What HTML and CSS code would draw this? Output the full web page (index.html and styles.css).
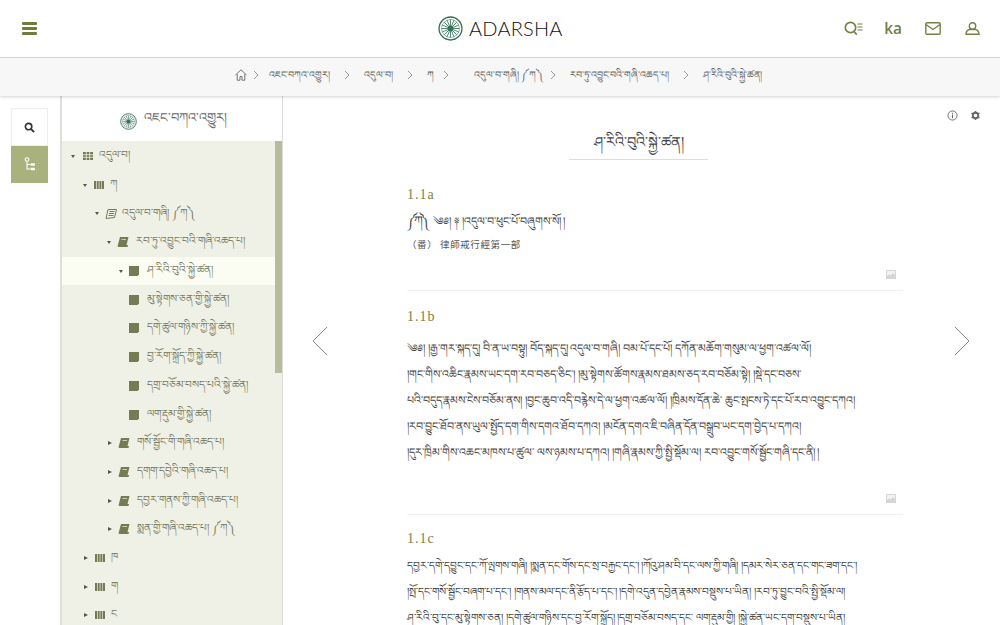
FILE: index.html
```html
<!DOCTYPE html>
<html lang="bo">
<head>
<meta charset="utf-8">
<title>Adarsha</title>
<link rel="stylesheet" href="styles.css">
</head>
<body>
<svg class="defs" width="0" height="0" aria-hidden="true">
  <symbol id="wheel" viewBox="0 0 24 24">
    <circle cx="12" cy="12" r="11" fill="none" stroke="currentColor" stroke-width="1.3"/>
    <circle cx="12" cy="12" r="8.6" fill="none" stroke="currentColor" stroke-width=".5"/>
    <path d="M12 3.5V20.500M3.500 12H20.500M6 6l12 12M18 6L6 18M8.700 4.100l6.600 15.800M15.300 4.100L8.700 19.900M4.100 8.700l15.800 6.600M19.900 8.700L4.100 15.300" stroke="currentColor" stroke-width=".8" fill="none"/>
    <circle cx="12" cy="12" r="2.600" fill="currentColor"/>
  </symbol>
  <symbol id="grid" viewBox="0 0 10 10"><path d="M0 1h10v8H0z" fill="currentColor"/><path d="M3.300 1v8M6.700 1v8M0 3.700h10M0 6.300h10" stroke="#eff1e6" stroke-width=".8"/></symbol>
  <symbol id="bars" viewBox="0 0 10 10"><path d="M0 1h2v8H0zM2.700 1h2v8h-2zM5.400 1h2v8h-2zM8 1h2v8H8z" fill="currentColor"/></symbol>
  <symbol id="scroll" viewBox="0 0 12 10"><path d="M3 .5h8.500L9.500 8.500 1 9.500z" fill="none" stroke="currentColor" stroke-width="1"/><path d="M4.500 2.500h5M4 4.500h5M3.500 6.500h5" stroke="currentColor" stroke-width="1"/></symbol>
  <symbol id="book" viewBox="0 0 12 10"><path d="M3 0h8.500L9.500 8 11 8 10.500 10H1.500C.5 10 .5 8.500 1 7.500z" fill="currentColor"/><path d="M4.500 2.500h4.500" stroke="#eff1e6" stroke-width=".7"/></symbol>
  <symbol id="leaf" viewBox="0 0 10 10"><path d="M0 0h10v8.500L8.500 10H0z" fill="currentColor"/></symbol>
  <symbol id="pic" viewBox="0 0 10 9"><path d="M0 0h10v9H0z" fill="#d5d5d5"/><path d="M1 1h8v4L7 3 4.500 5.500 3 4.500 1 6z" fill="#f2f2f2"/></symbol>
  <symbol id="chev" viewBox="0 0 6 10"><path d="M1 1l4 4-4 4" fill="none" stroke="currentColor" stroke-width="1"/></symbol>
</svg>

<header class="topbar">
  <button class="burger" aria-label="menu"><i></i><i></i><i></i></button>
  <div class="brand"><svg class="brand-mark"><use href="#wheel"/></svg><span class="brand-name">ADARSHA</span></div>
  <nav class="tools">
    <svg class="tool tool-find" viewBox="0 0 19 16"><circle cx="6.500" cy="7.500" r="5.200" fill="none" stroke="currentColor" stroke-width="1.700"/><path d="M10 11.500l2.800 3.300" stroke="currentColor" stroke-width="1.700"/><path d="M13.500 4h5M13.500 7h5M13.500 10h5" stroke="currentColor" stroke-width="1.100"/></svg>
    <span class="tool-ka">ka</span>
    <svg class="tool tool-mail" viewBox="0 0 16 13"><rect x=".8" y=".8" width="14.400" height="11.400" rx="1.200" fill="none" stroke="currentColor" stroke-width="1.400"/><path d="M1 2.500l7 5 7-5" fill="none" stroke="currentColor" stroke-width="1.400"/></svg>
    <svg class="tool tool-user" viewBox="0 0 15 13"><circle cx="7.500" cy="4" r="3.200" fill="none" stroke="currentColor" stroke-width="1.400"/><path d="M1 12.300c0-3 2-4.800 3.500-4.800h6c1.500 0 3.500 1.800 3.500 4.800z" fill="none" stroke="currentColor" stroke-width="1.400"/></svg>
  </nav>
</header>

<nav class="crumbs">
  <svg class="home" viewBox="0 0 12 12"><path d="M.5 6L6 .8 11.500 6M2.200 5v6.200h2.800V7.500h2v3.700h2.800V5" fill="none" stroke="currentColor" stroke-width=".9"/></svg>
  <svg class="sep sep-first"><use href="#chev"/></svg>
  <span>འཇང་བཀའ་འགྱུར།</span>
  <svg class="sep"><use href="#chev"/></svg>
  <span>འདུལ་བ།</span>
  <svg class="sep"><use href="#chev"/></svg>
  <span>ཀ</span>
  <svg class="sep sep-wide"><use href="#chev"/></svg>
  <span>འདུལ་བ་གཞི། ༼ཀ༽</span>
  <svg class="sep sep-near"><use href="#chev"/></svg>
  <span>རབ་ཏུ་འབྱུང་བའི་གཞི་འཆད་པ།</span>
  <svg class="sep"><use href="#chev"/></svg>
  <span>ཤ་རིའི་བུའི་སྐྱེ་ཚན།</span>
</nav>

<div class="workspace">
  <aside class="rail">
    <button class="rail-btn"><svg viewBox="0 0 12 12"><circle cx="5" cy="5" r="3.500" fill="none" stroke="currentColor" stroke-width="1.800"/><path d="M7.500 7.500l3.500 3.500" stroke="currentColor" stroke-width="2"/></svg></button>
    <button class="rail-btn rail-btn-on"><svg viewBox="0 0 12 15"><circle cx="3" cy="2.500" r="1.800" fill="none" stroke="currentColor" stroke-width="1.100"/><path d="M3 4.500v7.500h3M3 7.500h3" fill="none" stroke="currentColor" stroke-width="1.100"/><rect x="6.500" y="6.200" width="4.500" height="2.600" rx=".7" fill="currentColor"/><rect x="6.500" y="10.700" width="4.500" height="2.600" rx=".7" fill="currentColor"/></svg></button>
  </aside>

  <aside class="side">
    <div class="side-head"><svg class="side-mark"><use href="#wheel"/></svg><span>འཇང་བཀའ་འགྱུར།</span></div>
    <div class="side-body">
      <ul class="tree">
        <li class="node l0 open"><i class="caret"></i><svg class="ic"><use href="#grid"/></svg><span>འདུལ་བ།</span></li>
        <li class="node l1 open"><i class="caret"></i><svg class="ic"><use href="#bars"/></svg><span>ཀ</span></li>
        <li class="node l2 open"><i class="caret"></i><svg class="ic ic-w"><use href="#scroll"/></svg><span>འདུལ་བ་གཞི། ༼ཀ༽</span></li>
        <li class="node l3 open"><i class="caret"></i><svg class="ic ic-w"><use href="#book"/></svg><span>རབ་ཏུ་འབྱུང་བའི་གཞི་འཆད་པ།</span></li>
        <li class="node l4 open current"><i class="caret"></i><svg class="ic"><use href="#leaf"/></svg><span>ཤ་རིའི་བུའི་སྐྱེ་ཚན།</span></li>
        <li class="node l4"><i class="caret none"></i><svg class="ic"><use href="#leaf"/></svg><span>མུ་སྟེགས་ཅན་གྱི་སྐྱེ་ཚན།</span></li>
        <li class="node l4"><i class="caret none"></i><svg class="ic"><use href="#leaf"/></svg><span>དགེ་ཚུལ་གཉིས་ཀྱི་སྐྱེ་ཚན།</span></li>
        <li class="node l4"><i class="caret none"></i><svg class="ic"><use href="#leaf"/></svg><span>བྱ་རོག་སྐྲོད་ཀྱི་སྐྱེ་ཚན།</span></li>
        <li class="node l4"><i class="caret none"></i><svg class="ic"><use href="#leaf"/></svg><span>དགྲ་བཅོམ་བསད་པའི་སྐྱེ་ཚན།</span></li>
        <li class="node l4"><i class="caret none"></i><svg class="ic"><use href="#leaf"/></svg><span>ལག་རྡུམ་གྱི་སྐྱེ་ཚན།</span></li>
        <li class="node l3"><i class="caret shut"></i><svg class="ic ic-w"><use href="#book"/></svg><span>གསོ་སྦྱོང་གི་གཞི་འཆད་པ།</span></li>
        <li class="node l3"><i class="caret shut"></i><svg class="ic ic-w"><use href="#book"/></svg><span>དགག་དབྱེའི་གཞི་འཆད་པ།</span></li>
        <li class="node l3"><i class="caret shut"></i><svg class="ic ic-w"><use href="#book"/></svg><span>དབྱར་གནས་ཀྱི་གཞི་འཆད་པ།</span></li>
        <li class="node l3"><i class="caret shut"></i><svg class="ic ic-w"><use href="#book"/></svg><span>སྨན་གྱི་གཞི་འཆད་པ། ༼ཀ༽</span></li>
        <li class="node l1"><i class="caret shut"></i><svg class="ic"><use href="#bars"/></svg><span>ཁ</span></li>
        <li class="node l1"><i class="caret shut"></i><svg class="ic"><use href="#bars"/></svg><span>ག</span></li>
        <li class="node l1"><i class="caret shut"></i><svg class="ic"><use href="#bars"/></svg><span>ང</span></li>
      </ul>
      <div class="track"><div class="thumb"></div></div>
    </div>
  </aside>

  <main class="pane">
    <div class="pane-tools">
      <svg viewBox="0 0 12 12"><circle cx="6" cy="6" r="5" fill="none" stroke="currentColor" stroke-width="1"/><path d="M6 5v4M6 3v1.200" stroke="currentColor" stroke-width="1.200"/></svg>
      <svg viewBox="0 0 12 12"><circle cx="6" cy="6" r="3" fill="none" stroke="currentColor" stroke-width="2"/><path d="M6 1v2M6 9v2M1.700 3.500l1.700 1M8.600 7.500l1.700 1M1.700 8.500l1.700-1M8.600 4.500l1.700-1" stroke="currentColor" stroke-width="1.600"/></svg>
    </div>
    <svg class="pager pager-prev" viewBox="0 0 16 30"><path d="M15 1L1 15l14 14" fill="none" stroke="currentColor" stroke-width="1"/></svg>
    <svg class="pager pager-next" viewBox="0 0 16 30"><path d="M1 1l14 14L1 29" fill="none" stroke="currentColor" stroke-width="1"/></svg>

    <h1 class="title">ཤ་རིའི་བུའི་སྐྱེ་ཚན།</h1>

    <div class="reader">
      <section class="folio folio-a">
        <h2 class="folio-no">1.1a</h2>
        <p class="line-open"><span class="mark">༼ཀ༽</span> ༄༅། ༈ །འདུལ་བ་ཕུང་པོ་བཞུགས་སོ། །</p>
        <p class="zh" lang="zh-Hant">（番） 律師戒行經第一部</p>
        <svg class="pic"><use href="#pic"/></svg>
      </section>
      <section class="folio folio-b">
        <h2 class="folio-no">1.1b</h2>
        <p class="verse">
          <span class="ln">༄༅། །རྒྱ་གར་སྐད་དུ། བི་ན་ཡ་བསྟུ། བོད་སྐད་དུ། འདུལ་བ་གཞི། བམ་པོ་དང་པོ། དཀོན་མཆོག་གསུམ་ལ་ཕྱག་འཚལ་ལོ།</span>
          <span class="ln">།གང་གིས་འཆིང་རྣམས་ཡང་དག་རབ་བཅད་ཅིང་། །མུ་སྟེགས་ཚོགས་རྣམས་ཐམས་ཅད་རབ་བཅོམ་སྟེ། །སྡེ་དང་བཅས་</span>
          <span class="ln">པའི་བདུད་རྣམས་ངེས་བཅོམ་ནས། །བྱང་ཆུབ་འདི་བརྙེས་དེ་ལ་ཕྱག་འཚལ་ལོ། །ཁྲིམས་དོན་ཆེ་ ཆུང་སྤངས་ཏེ་དང་པོ་རབ་འབྱུང་དཀའ།</span>
          <span class="ln">།རབ་བྱུང་ཐོབ་ནས་ཡུལ་སྤྱོད་དག་གིས་དགའ་ཐོབ་དཀའ། །མངོན་དགའ་ཇི་བཞིན་དོན་བསྒྲུབ་ཡང་དག་བྱེད་པ་དཀའ།</span>
          <span class="ln">།དུར་ཁྲིམ་གིས་འཆང་མཁས་པ་ཚུལ་ ལས་ཉམས་པ་དཀའ། །གཞི་རྣམས་ཀྱི་སྤྱི་སྡོམ་ལ། རབ་འབྱུང་གསོ་སྦྱོང་གཞི་དང་ནི། །</span>
        </p>
        <svg class="pic"><use href="#pic"/></svg>
      </section>
      <section class="folio folio-c">
        <h2 class="folio-no">1.1c</h2>
        <p class="verse verse-c">
          <span class="ln">དབྱར་དགེ་དབྱུང་དང་ཀོ་ལྤགས་གཞི། །སྨན་དང་གོས་དང་སྲ་བརྐྱང་དང་། །ཀོའུ་ཤམ་བི་དང་ལས་ཀྱི་གཞི། །དམར་སེར་ཅན་དང་གང་ཟག་དང་།</span>
          <span class="ln">།སྤོ་དང་གསོ་སྦྱོང་བཞག་པ་དང་། །གནས་མལ་དང་ནི་རྩོད་པ་དང་། །དགེ་འདུན་དབྱེན་རྣམས་བསྡུས་པ་ཡིན། །རབ་ཏུ་བྱུང་བའི་སྤྱི་སྡོམ་ལ།</span>
          <span class="ln">ཤ་རིའི་བུ་དང་མུ་སྟེགས་ཅན། །དགེ་ཚུལ་གཉིས་དང་བྱ་རོག་སྐྲོད། །དགྲ་བཅོམ་བསད་དང་ ལག་རྡུམ་གྱི། །སྐྱེ་ཚན་ཡང་དག་བསྡུས་པ་ཡིན།</span>
        </p>
      </section>
    </div>
  </main>
</div>
</body>
</html>
```
FILE: styles.css
```css
* { box-sizing: border-box; }
html, body { margin: 0; height: 100%; }
body {
  width: 1000px; height: 625px; overflow: hidden; background: #fff;
  display: flex; flex-direction: column;
  font-family: "Noto Sans", sans-serif; color: #555;
}
.defs { position: absolute; }
button { padding: 0; border: 0; background: none; }
h1, h2, p, ul { margin: 0; padding: 0; font-weight: normal; }
ul { list-style: none; }

/* top bar */
.topbar {
  flex: none; height: 58px; display: flex; align-items: center; position: relative;
  border-bottom: 1px solid #dcdcdc; padding: 0 20px 1px 22px; justify-content: space-between;
}
.burger { width: 15px; display: flex; flex-direction: column; gap: 2px; }
.burger i { display: block; height: 3px; background: #717c3a; border-radius: 1px; }
.brand { position: absolute; left: 438px; top: 15px; display: flex; align-items: center; gap: 6px; }
.brand-mark { width: 25px; height: 25px; color: #35705a; }
.brand-name { font-family: Lato, sans-serif; font-weight: 300; font-size: 20px; letter-spacing: .2px; color: #111; line-height: 26px; }
.tools { display: flex; align-items: center; color: #777f45; }
.tool { display: block; }
.tool-find { width: 19px; height: 16px; margin-right: 21px; }
.tool-ka { font-family: "Open Sans", sans-serif; font-weight: 600; font-size: 15.500px; line-height: 20px; margin-right: 23px; }
.tool-mail { width: 16px; height: 13px; margin-right: 24px; }
.tool-user { width: 15px; height: 13px; }

/* breadcrumb */
.crumbs {
  flex: none; height: 38px; background: #f7f7f7; position: relative; z-index: 2;
  display: flex; align-items: center; padding: 0 0 4px 235px; white-space: nowrap;
  font-size: 9.500px; line-height: 20px; color: #666;
  box-shadow: 0 1px 3px rgba(0,0,0,.18);
}
.home { width: 12px; height: 12px; color: #666; }
.sep { width: 6px; height: 10px; margin: 0 14px; color: #999; flex: none; }
.sep-first { margin: 0 10px 0 6px; }
.sep-wide { margin: 0 25px 0 9px; }
.sep-near { margin: 0 14px 0 7px; }

/* work area */
.workspace { flex: 1; min-height: 0; display: flex; }
.rail { flex: none; width: 60px; padding: 12px 12px 0 11px; }
.rail-btn { display: flex; width: 37px; height: 38px; align-items: center; justify-content: center; border: 1px solid #eee; color: #333; background: #fff; }
.rail-btn svg { width: 11px; height: 11px; }
.rail-btn-on { height: 37px; background: #a9b27d; border-color: #a9b27d; color: #fff; }
.rail-btn-on svg { width: 12px; height: 15px; }

.side {
  flex: none; width: 223px; display: flex; flex-direction: column; min-height: 0;
  border-left: 2px solid #dedfd8; border-right: 1px solid #dcdcdc;
}
.side-head { flex: none; height: 45px; padding: 5px 0 0 58px; display: flex; align-items: center; gap: 7px; font-size: 13px; color: #666; }
.side-mark { width: 17px; height: 17px; color: #35705a; }
.side-body { flex: 1; min-height: 0; display: flex; background: #eff1e6; overflow: hidden; }
.tree { flex: 1; min-width: 0; padding-top: 1px; }
.track { flex: none; width: 7px; }
.thumb { height: 232px; background: #b7bc9d; }

.node { height: 28.700px; display: flex; align-items: center; font-size: 10.500px; color: #777a64; white-space: nowrap; }
.node span { padding-top: 3px; }
.l0 { padding-left: 9px; }
.l1 { padding-left: 21px; }
.l2 { padding-left: 33px; }
.l3 { padding-left: 45px; }
.l4 { padding-left: 57px; }
.current { background: #fbfcf2; }
.caret { flex: none; width: 0; height: 0; margin-right: 6px; border-style: solid; border-color: transparent; border-width: 3px 2.500px 0; border-top-color: #55583e; }
.caret.none { border-color: transparent; }
.caret.shut { border-width: 2.500px 0 2.500px 4px; border-color: transparent transparent transparent #55583e; margin-left: 1px; }
.l0 .caret { margin-right: 8px; }
.l1 .caret { margin-right: 7px; }
.ic { flex: none; width: 10px; height: 10px; margin-right: 6px; color: #777b55; }
.ic-w { width: 12px; margin-right: 7px; }
.l2 .ic { margin-right: 5px; }
.l4 .ic { margin-right: 8px; }

/* reading pane */
.pane { flex: 1; min-width: 0; position: relative; overflow: hidden; }
.pane-tools { position: absolute; right: 19px; top: 14px; display: flex; gap: 12px; color: #666; }
.pane-tools svg { display: block; width: 11px; height: 11px; }
.pager { position: absolute; top: 230px; width: 16px; height: 30px; color: #888; }
.pager-prev { left: 29px; }
.pager-next { left: 671px; }
.title { width: 139px; margin: 31px 0 0 286px; padding-bottom: 5px; height: 33px; border-bottom: 1px solid #ddd; text-align: center; font-size: 14.500px; line-height: 28px; color: #444; white-space: nowrap; }
.reader { width: 496px; margin-left: 124px; }
.folio { position: relative; border-bottom: 1px solid #f1f1f1; }
.folio-a { height: 131px; padding-top: 26px; }
.folio-b { height: 224px; padding-top: 17px; }
.folio-c { border-bottom: 0; padding-top: 15px; }
.folio-no { font-family: "Liberation Serif", serif; font-size: 14px; line-height: 18px; letter-spacing: 1px; color: #7d8148; }
.line-open { margin-top: 6px; font-size: 11px; line-height: 22px; height: 22px; white-space: nowrap; color: #444; }
.mark { font-size: 12.500px; letter-spacing: -3px; margin-right: 4px; }
.zh { margin-top: 4px; font-family: "Noto Sans CJK TC", sans-serif; font-size: 9.500px; line-height: 16px; letter-spacing: .6px; color: #555; }
.verse { margin-top: 9px; width: 450px; font-size: 11px; line-height: 26px; color: #444; }
.verse-c { margin-top: 4px; font-size: 10.500px; }
.ln { display: block; white-space: nowrap; }
.pic { position: absolute; right: 7px; bottom: 11px; width: 10px; height: 9px; }
```
